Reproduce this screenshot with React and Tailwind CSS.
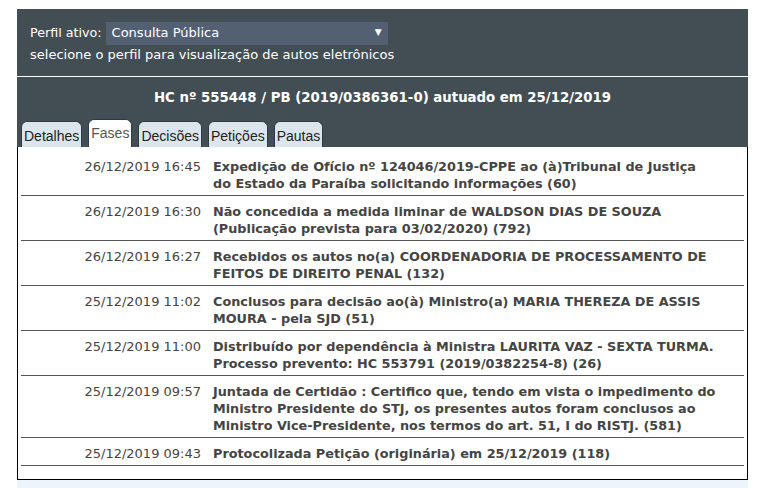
const fases = [
  {
    data: "26/12/2019 16:45",
    linhas: [
      "Expedição de Ofício nº 124046/2019-CPPE ao (à)Tribunal de Justiça",
      "do Estado da Paraíba solicitando informações (60)",
    ],
  },
  {
    data: "26/12/2019 16:30",
    linhas: [
      "Não concedida a medida liminar de WALDSON DIAS DE SOUZA",
      "(Publicação prevista para 03/02/2020) (792)",
    ],
  },
  {
    data: "26/12/2019 16:27",
    linhas: [
      "Recebidos os autos no(a) COORDENADORIA DE PROCESSAMENTO DE",
      "FEITOS DE DIREITO PENAL (132)",
    ],
  },
  {
    data: "25/12/2019 11:02",
    linhas: [
      "Conclusos para decisão ao(à) Ministro(a) MARIA THEREZA DE ASSIS",
      "MOURA - pela SJD (51)",
    ],
  },
  {
    data: "25/12/2019 11:00",
    linhas: [
      "Distribuído por dependência à Ministra LAURITA VAZ - SEXTA TURMA.",
      "Processo prevento: HC 553791 (2019/0382254-8) (26)",
    ],
  },
  {
    data: "25/12/2019 09:57",
    linhas: [
      "Juntada de Certidão : Certifico que, tendo em vista o impedimento do",
      "Ministro Presidente do STJ, os presentes autos foram conclusos ao",
      "Ministro Vice-Presidente, nos termos do art. 51, I do RISTJ. (581)",
    ],
  },
  {
    data: "25/12/2019 09:43",
    linhas: ["Protocolizada Petição (originária) em 25/12/2019 (118)"],
  },
];

const abas = ["Detalhes", "Fases", "Decisões", "Petições", "Pautas"];

export default function App() {
  return (
    <div className="w-[760px] h-[488px] bg-white overflow-hidden pt-[9px] pl-[17px] font-['DejaVu_Sans',Verdana,sans-serif]">
      <div className="w-[731px]">
        {/* Perfil */}
        <div className="bg-[#434e54] px-[13px] pt-[12px] h-[67px] text-white text-[13px]">
          <div className="flex items-center h-[23px] pt-[1px]">
            <span className="mr-[4px] text-[12.7px]">Perfil ativo:</span>
            <div className="w-[282px] h-[23px] bg-[#536072] flex items-center justify-between pl-[6px] pr-[6px]">
              <span>Consulta Pública</span>
              <span className="text-[9px]">▼</span>
            </div>
          </div>
          <div className="mt-[1px] leading-[20px]">
            selecione o perfil para visualização de autos eletrônicos
          </div>
        </div>
        <div className="h-px bg-white" />
        {/* Cabeçalho do processo */}
        <div className="bg-[#434e54] h-[70px] flex flex-col">
          <div className="text-white font-bold text-[13.3px] text-center pt-[12px] leading-[18px]">
            HC nº 555448 / PB (2019/0386361-0) autuado em 25/12/2019
          </div>
          <div className="flex items-end gap-[6px] pl-[4px] mt-auto">
            {abas.map((a) => (
              <div
                key={a}
                className={
                  a === "Fases"
                    ? "h-[28px] px-[2px] pt-[3px] rounded-t-[6px] border border-b-0 border-[#2c3a46] bg-white text-[#555] font-['Liberation_Sans',Arial,sans-serif] text-[14px]"
                    : "h-[26px] px-[2px] pt-[4px] rounded-t-[6px] border border-b-0 border-[#2c3a46] bg-[#dde5ec] text-[#222] font-['Liberation_Sans',Arial,sans-serif] text-[14px]"
                }
              >
                {a}
              </div>
            ))}
          </div>
        </div>
        {/* Fases */}
        <div className="border border-t-0 border-black bg-white px-[3px] pt-[4px] pb-[13px]">
          {fases.map((f) => (
            <div
              key={f.data}
              className="flex border-b border-[#555] pt-[7px] pb-[3px] text-[13px] leading-[17px] text-[#444]"
            >
              <div className="w-[181px] text-right pr-[1px] shrink-0">{f.data}</div>
              <div className="pl-[11px] font-bold text-[12.8px]">
                {f.linhas.map((l) => (
                  <div key={l} className="whitespace-nowrap">
                    {l}
                  </div>
                ))}
              </div>
            </div>
          ))}
        </div>
      </div>
      <div className="w-[731px] h-[20px] bg-[#eef4fb]" />
    </div>
  );
}
